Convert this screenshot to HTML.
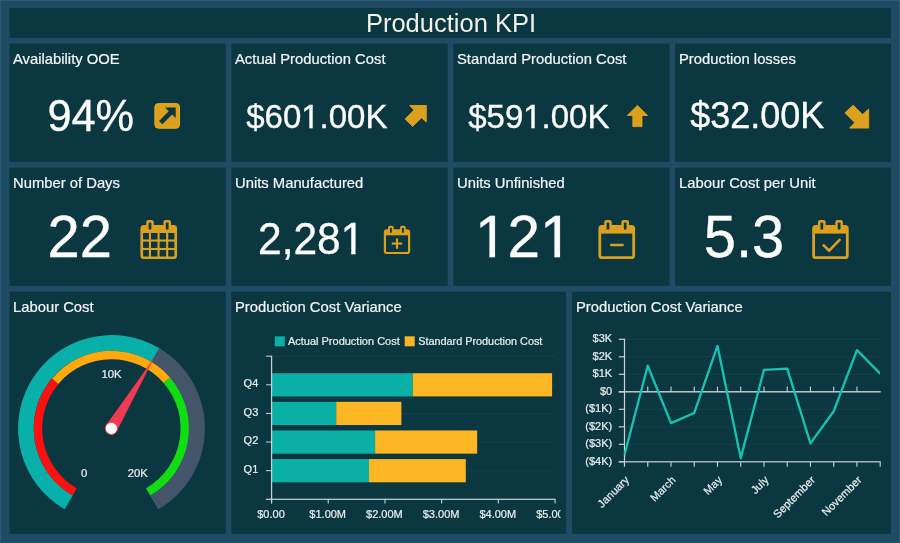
<!DOCTYPE html>
<html><head><meta charset="utf-8">
<style>
html,body{margin:0;padding:0;}
body{width:900px;height:543px;background:#204b64;font-family:"Liberation Sans",sans-serif;color:#f4f4f4;position:relative;overflow:hidden;}
.t{-webkit-text-stroke:0.2px #f6f6f6;will-change:transform;position:absolute;font-size:14.8px;line-height:18px;white-space:nowrap;color:#f6f6f6;}
.v{position:absolute;white-space:nowrap;color:#fcfcfc;line-height:1;}
svg text{stroke:#e9eded;stroke-width:0.22px;}
svg text.big{stroke:#fcfcfc;stroke-width:0.35px;}
svg{will-change:transform;position:absolute;left:0;top:0;width:900px;height:543px;overflow:hidden;font-family:"Liberation Sans",sans-serif;}
#hdr{will-change:transform;position:absolute;left:9.6px;top:8px;width:882px;height:30px;text-align:center;font-size:25.5px;line-height:30px;color:#f3efe9;}
</style></head><body>
<svg width="900" height="543" viewBox="0 0 900 543">
<rect x="0" y="0" width="900" height="1" fill="#2c5a72"/><rect x="0" y="0" width="1" height="543" fill="#2c5a72"/><rect x="899" y="0" width="1" height="543" fill="#2c5a72"/><rect x="0" y="542" width="900" height="1" fill="#275670"/>
<rect x="9.5" y="8.0" width="881.45" height="29.85" fill="#0b3741"/><rect x="9.5" y="43.6" width="216.20" height="118.20" fill="#0b3741"/><rect x="231.35" y="43.6" width="216.35" height="118.20" fill="#0b3741"/><rect x="453.25" y="43.6" width="216.30" height="118.20" fill="#0b3741"/><rect x="675.2" y="43.6" width="215.75" height="118.20" fill="#0b3741"/><rect x="9.5" y="167.65" width="216.20" height="118.15" fill="#0b3741"/><rect x="231.35" y="167.65" width="216.35" height="118.15" fill="#0b3741"/><rect x="453.25" y="167.65" width="216.30" height="118.15" fill="#0b3741"/><rect x="675.2" y="167.65" width="215.75" height="118.15" fill="#0b3741"/><rect x="9.5" y="291.7" width="216.20" height="242.10" fill="#0b3741"/><rect x="231.3" y="291.7" width="334.85" height="242.10" fill="#0b3741"/><rect x="571.95" y="291.7" width="319.00" height="242.10" fill="#0b3741"/></svg>
<div id="hdr">Production KPI</div>
<div class="t" style="left:13px;top:50px">Availability OOE</div>
<div class="t" style="left:235px;top:50px">Actual Production Cost</div>
<div class="t" style="left:457px;top:50px">Standard Production Cost</div>
<div class="t" style="left:679px;top:50px">Production losses</div>
<div class="t" style="left:13px;top:174px">Number of Days</div>
<div class="t" style="left:235px;top:174px">Units Manufactured</div>
<div class="t" style="left:457px;top:174px">Units Unfinished</div>
<div class="t" style="left:679px;top:174px">Labour Cost per Unit</div>
<div class="t" style="left:13px;top:298px">Labour Cost</div>
<div class="t" style="left:235px;top:298px">Production Cost Variance</div>
<div class="t" style="left:576px;top:298px">Production Cost Variance</div>
<svg width="900" height="543" viewBox="0 0 900 543">
<defs><clipPath id="cb"><rect x="231" y="500" width="329.6" height="34"/></clipPath>
<clipPath id="cl"><rect x="623.3" y="330" width="256.90000000000003" height="140"/></clipPath></defs>
<text transform="translate(47.4,130.6) scale(1,1.04)" class="big" font-size="43.3" fill="#fcfcfc">94%</text><text transform="translate(246.2,127.5) scale(1,1.03)" class="big" font-size="33" fill="#fcfcfc">$601.00K</text><text transform="translate(468.2,127.5) scale(1,1.03)" class="big" font-size="33" fill="#fcfcfc">$591.00K</text><text transform="translate(690.2,127.7) scale(1,1.04)" class="big" font-size="36" fill="#fcfcfc">$32.00K</text><text transform="translate(47.6,257.3) scale(1,1.017)" class="big" font-size="58" fill="#fcfcfc">22</text><text transform="translate(258.0,254.0) scale(1,1.03)" class="big" font-size="42.5" fill="#fcfcfc">2,281</text><text transform="translate(475.0,257.4) scale(1,1.028)" class="big" font-size="58.5" fill="#fcfcfc">121</text><text transform="translate(703.7,257.0) scale(1,1.01)" class="big" font-size="58" fill="#fcfcfc">5.3</text>
<rect x="477.5" y="251.95" width="11.88" height="6.55" fill="#0b3741"/><rect x="495.09" y="251.95" width="11.41" height="6.55" fill="#0b3741"/>
<rect x="542.5" y="251.95" width="11.88" height="6.55" fill="#0b3741"/><rect x="560.09" y="251.95" width="11.41" height="6.55" fill="#0b3741"/>
<rect x="342.5" y="249.95" width="8.72" height="5.55" fill="#0b3741"/><rect x="355.56" y="249.95" width="8.94" height="5.55" fill="#0b3741"/>
<rect x="301.5" y="124.95" width="7.79" height="4.55" fill="#0b3741"/><rect x="312.72" y="124.95" width="7.78" height="4.55" fill="#0b3741"/>
<rect x="523.5" y="124.95" width="7.79" height="4.55" fill="#0b3741"/><rect x="534.72" y="124.95" width="7.78" height="4.55" fill="#0b3741"/>
<rect x="154.9" y="103.6" width="24.6" height="24.6" rx="3.4" fill="#dca01f" stroke="#eeaa1c" stroke-width="1"/>
<path d="M164.9,107.5 L175.7,107.5 L175.7,118.1 L172.2,114.5 L162.3,124.2 L159.0,120.9 L168.8,111.2 Z" fill="#0b3741"/>
<path d="M409.6,105.5 L426.3,105.5 L426.3,122 L421.6,117.7 L412.6,126.4 L405.1,118.9 L414.1,110.1 Z" fill="#dca01f" stroke="#eeaa1c" stroke-width="0.8" stroke-linejoin="miter"/>
<path d="M637.4,105.4 L647.6,115.5 L642,115.5 L642,126.6 L632.8,126.6 L632.8,115.5 L627.2,115.5 Z" fill="#dca01f" stroke="#eeaa1c" stroke-width="0.8"/>
<path d="M853.2,105.2 L862.6,114.5 L868.7,109 L868.7,128.1 L849.6,128.1 L854.8,122.6 L844.9,112.8 Z" fill="#dca01f" stroke="#eeaa1c" stroke-width="0.8"/>
<rect x="141.75" y="226.35" width="34.00" height="31.40" rx="2.3" fill="none" stroke="#dca01f" stroke-width="2.7"/><rect x="141.75" y="226.35" width="34.00" height="6.65" fill="#dca01f"/><rect x="146.20" y="220.00" width="7.60" height="10.10" rx="2.24" fill="#dca01f"/><rect x="148.65" y="222.45" width="2.70" height="7.05" rx="0.84" fill="#0b3741"/><rect x="163.40" y="220.00" width="7.60" height="10.10" rx="2.24" fill="#dca01f"/><rect x="165.85" y="222.45" width="2.70" height="7.05" rx="0.84" fill="#0b3741"/>
<rect x="148.90" y="233" width="2.1" height="24" fill="#dca01f"/>
<rect x="157.50" y="233" width="2.1" height="24" fill="#dca01f"/>
<rect x="166.10" y="233" width="2.1" height="24" fill="#dca01f"/>
<rect x="142" y="239.50" width="34" height="2.1" fill="#dca01f"/>
<rect x="142" y="247.95" width="34" height="2.1" fill="#dca01f"/>
<rect x="384.90" y="230.30" width="24.20" height="22.70" rx="2" fill="none" stroke="#dca01f" stroke-width="2.2"/><rect x="384.90" y="230.30" width="24.20" height="5.00" fill="#dca01f"/><rect x="388.10" y="225.80" width="5.60" height="7.50" rx="1.65" fill="#dca01f"/><rect x="390.00" y="227.70" width="1.80" height="5.00" rx="0.56" fill="#0b3741"/><rect x="400.10" y="225.80" width="5.60" height="7.50" rx="1.65" fill="#dca01f"/><rect x="402.00" y="227.70" width="1.80" height="5.00" rx="0.56" fill="#0b3741"/>
<rect x="391.8" y="242.5" width="10.4" height="2.1" fill="#dca01f"/><rect x="395.95" y="238.4" width="2.1" height="10.4" fill="#dca01f"/>
<rect x="599.80" y="226.40" width="33.90" height="31.30" rx="2.3" fill="none" stroke="#dca01f" stroke-width="2.8"/><rect x="599.80" y="226.40" width="33.90" height="7.20" fill="#dca01f"/><rect x="604.20" y="220.00" width="7.60" height="10.10" rx="2.24" fill="#dca01f"/><rect x="606.65" y="222.45" width="2.70" height="7.05" rx="0.84" fill="#0b3741"/><rect x="621.40" y="220.00" width="7.60" height="10.10" rx="2.24" fill="#dca01f"/><rect x="623.85" y="222.45" width="2.70" height="7.05" rx="0.84" fill="#0b3741"/>
<rect x="610" y="243.7" width="13.8" height="2.5" rx="1" fill="#dca01f"/>
<rect x="813.60" y="226.40" width="33.70" height="31.30" rx="2.3" fill="none" stroke="#dca01f" stroke-width="2.8"/><rect x="813.60" y="226.40" width="33.70" height="7.20" fill="#dca01f"/><rect x="818.00" y="220.00" width="7.60" height="10.10" rx="2.24" fill="#dca01f"/><rect x="820.45" y="222.45" width="2.70" height="7.05" rx="0.84" fill="#0b3741"/><rect x="835.30" y="220.00" width="7.60" height="10.10" rx="2.24" fill="#dca01f"/><rect x="837.75" y="222.45" width="2.70" height="7.05" rx="0.84" fill="#0b3741"/>
<path d="M822.9,244.6 L829.1,250.6 L840.3,239.2" fill="none" stroke="#dca01f" stroke-width="2.6" stroke-linecap="butt" stroke-linejoin="miter"/>
<path d="M64.65,509.37 A93.5,93.5 0 1 1 159.56,348.25 L151.26,362.06 A77.4,77.4 0 1 0 72.70,495.43 Z" fill="#09b0a9"/>
<path d="M159.56,348.25 A93.5,93.5 0 0 1 158.15,509.37 L150.10,495.43 A77.4,77.4 0 0 0 151.26,362.06 Z" fill="#44546a"/>
<path d="M72.60,495.60 A77.6,77.6 0 0 1 51.95,378.52 L58.39,383.92 A69.2,69.2 0 0 0 76.80,488.33 Z" fill="#ff1010"/>
<path d="M51.95,378.52 A77.6,77.6 0 0 1 169.97,377.49 L163.63,383.00 A69.2,69.2 0 0 0 58.39,383.92 Z" fill="#ffa90c"/>
<path d="M169.97,377.49 A77.6,77.6 0 0 1 150.20,495.60 L146.00,488.33 A69.2,69.2 0 0 0 163.63,383.00 Z" fill="#12dc12"/>
<path d="M106.10,425.19 L154.14,357.83 L116.70,431.61 Z" fill="#ef3a52"/>
<circle cx="111.4" cy="428.4" r="6.1" fill="#ffffff" stroke="#ef3a52" stroke-width="1"/>
<g font-size="11.3" fill="#e9eded" text-anchor="middle"><text x="111.6" y="378">10K</text><text x="84.2" y="477">0</text><text x="137.8" y="477">20K</text></g>
<rect x="271.5" y="355.70" width="283.5" height="1" fill="#17414b"/>
<rect x="271.5" y="384.32" width="283.5" height="1" fill="#17414b"/>
<rect x="271.5" y="412.94" width="283.5" height="1" fill="#17414b"/>
<rect x="271.5" y="441.56" width="283.5" height="1" fill="#17414b"/>
<rect x="271.5" y="470.18" width="283.5" height="1" fill="#17414b"/>
<rect x="272.0" y="373.22" width="140.80" height="23.2" fill="#0aafa5"/>
<rect x="412.80" y="373.22" width="139.30" height="23.2" fill="#fdb623"/>
<rect x="266" y="384.32" width="5.5" height="1" fill="#c9d3d4"/>
<text x="243.6" y="386.92" font-size="11" fill="#e9eded">Q4</text>
<rect x="272.0" y="401.84" width="64.20" height="23.2" fill="#0aafa5"/>
<rect x="336.20" y="401.84" width="65.20" height="23.2" fill="#fdb623"/>
<rect x="266" y="412.94" width="5.5" height="1" fill="#c9d3d4"/>
<text x="243.6" y="415.54" font-size="11" fill="#e9eded">Q3</text>
<rect x="272.0" y="430.46" width="103.10" height="23.2" fill="#0aafa5"/>
<rect x="375.10" y="430.46" width="102.10" height="23.2" fill="#fdb623"/>
<rect x="266" y="441.56" width="5.5" height="1" fill="#c9d3d4"/>
<text x="243.6" y="444.16" font-size="11" fill="#e9eded">Q2</text>
<rect x="272.0" y="459.08" width="97.00" height="23.2" fill="#0aafa5"/>
<rect x="369.00" y="459.08" width="96.80" height="23.2" fill="#fdb623"/>
<rect x="266" y="470.18" width="5.5" height="1" fill="#c9d3d4"/>
<text x="243.6" y="472.78" font-size="11" fill="#e9eded">Q1</text>
<rect x="266" y="355.7" width="5.5" height="1" fill="#c9d3d4"/>
<rect x="271.0" y="355.7" width="1.2" height="147.60000000000002" fill="#c9d3d4"/>
<rect x="266" y="498.7" width="289.5" height="1.2" fill="#c9d3d4"/>
<rect x="271.00" y="499.3" width="1.1" height="4.2" fill="#c9d3d4"/>
<rect x="327.70" y="499.3" width="1.1" height="4.2" fill="#c9d3d4"/>
<rect x="384.40" y="499.3" width="1.1" height="4.2" fill="#c9d3d4"/>
<rect x="441.10" y="499.3" width="1.1" height="4.2" fill="#c9d3d4"/>
<rect x="497.80" y="499.3" width="1.1" height="4.2" fill="#c9d3d4"/>
<rect x="554.50" y="499.3" width="1.1" height="4.2" fill="#c9d3d4"/>
<g clip-path="url(#cb)">
<text x="271.00" y="518.4" font-size="11" fill="#e9eded" text-anchor="middle">$0.00</text>
<text x="327.70" y="518.4" font-size="11" fill="#e9eded" text-anchor="middle">$1.00M</text>
<text x="384.40" y="518.4" font-size="11" fill="#e9eded" text-anchor="middle">$2.00M</text>
<text x="441.10" y="518.4" font-size="11" fill="#e9eded" text-anchor="middle">$3.00M</text>
<text x="497.80" y="518.4" font-size="11" fill="#e9eded" text-anchor="middle">$4.00M</text>
<text x="554.50" y="518.4" font-size="11" fill="#e9eded" text-anchor="middle">$5.00M</text>
</g>
<rect x="274.8" y="336.3" width="10" height="10" fill="#0aafa5"/>
<text x="287.9" y="344.8" font-size="11" fill="#e9eded">Actual Production Cost</text>
<rect x="404.7" y="336.3" width="10" height="10" fill="#fdb623"/>
<text x="418.2" y="344.8" font-size="10.85" fill="#e9eded">Standard Production Cost</text>
<rect x="624.5" y="338.80" width="255.70000000000005" height="1" fill="#17414b"/>
<rect x="624.5" y="356.30" width="255.70000000000005" height="1" fill="#17414b"/>
<rect x="624.5" y="373.80" width="255.70000000000005" height="1" fill="#17414b"/>
<rect x="624.5" y="408.80" width="255.70000000000005" height="1" fill="#17414b"/>
<rect x="624.5" y="426.30" width="255.70000000000005" height="1" fill="#17414b"/>
<rect x="624.5" y="443.80" width="255.70000000000005" height="1" fill="#17414b"/>
<rect x="618.8" y="338.70" width="6" height="1.2" fill="#c9d3d4"/>
<text x="612.2" y="342.40" font-size="11" fill="#e9eded" text-anchor="end">$3K</text>
<rect x="618.8" y="356.20" width="6" height="1.2" fill="#c9d3d4"/>
<text x="612.2" y="359.90" font-size="11" fill="#e9eded" text-anchor="end">$2K</text>
<rect x="618.8" y="373.70" width="6" height="1.2" fill="#c9d3d4"/>
<text x="612.2" y="377.40" font-size="11" fill="#e9eded" text-anchor="end">$1K</text>
<rect x="618.8" y="391.20" width="6" height="1.2" fill="#c9d3d4"/>
<text x="612.2" y="394.90" font-size="11" fill="#e9eded" text-anchor="end">$0</text>
<rect x="618.8" y="408.70" width="6" height="1.2" fill="#c9d3d4"/>
<text x="612.2" y="412.40" font-size="11" fill="#e9eded" text-anchor="end">($1K)</text>
<rect x="618.8" y="426.20" width="6" height="1.2" fill="#c9d3d4"/>
<text x="612.2" y="429.90" font-size="11" fill="#e9eded" text-anchor="end">($2K)</text>
<rect x="618.8" y="443.70" width="6" height="1.2" fill="#c9d3d4"/>
<text x="612.2" y="447.40" font-size="11" fill="#e9eded" text-anchor="end">($3K)</text>
<rect x="618.8" y="461.20" width="6" height="1.2" fill="#c9d3d4"/>
<text x="612.2" y="464.90" font-size="11" fill="#e9eded" text-anchor="end">($4K)</text>
<rect x="623.9" y="338.80" width="1.2" height="127.90" fill="#c9d3d4"/>
<rect x="618.8" y="391.10" width="261.90" height="1.4" fill="#c9d3d4"/>
<rect x="618.8" y="461.20" width="261.90" height="1.2" fill="#c9d3d4"/>
<rect x="647.20" y="461.80" width="1.1" height="5" fill="#c9d3d4"/>
<rect x="647.20" y="386.60" width="1.1" height="5" fill="#c9d3d4"/>
<rect x="670.44" y="461.80" width="1.1" height="5" fill="#c9d3d4"/>
<rect x="670.44" y="386.60" width="1.1" height="5" fill="#c9d3d4"/>
<rect x="693.69" y="461.80" width="1.1" height="5" fill="#c9d3d4"/>
<rect x="693.69" y="386.60" width="1.1" height="5" fill="#c9d3d4"/>
<rect x="716.93" y="461.80" width="1.1" height="5" fill="#c9d3d4"/>
<rect x="716.93" y="386.60" width="1.1" height="5" fill="#c9d3d4"/>
<rect x="740.18" y="461.80" width="1.1" height="5" fill="#c9d3d4"/>
<rect x="740.18" y="386.60" width="1.1" height="5" fill="#c9d3d4"/>
<rect x="763.42" y="461.80" width="1.1" height="5" fill="#c9d3d4"/>
<rect x="763.42" y="386.60" width="1.1" height="5" fill="#c9d3d4"/>
<rect x="786.67" y="461.80" width="1.1" height="5" fill="#c9d3d4"/>
<rect x="786.67" y="386.60" width="1.1" height="5" fill="#c9d3d4"/>
<rect x="809.91" y="461.80" width="1.1" height="5" fill="#c9d3d4"/>
<rect x="809.91" y="386.60" width="1.1" height="5" fill="#c9d3d4"/>
<rect x="833.16" y="461.80" width="1.1" height="5" fill="#c9d3d4"/>
<rect x="833.16" y="386.60" width="1.1" height="5" fill="#c9d3d4"/>
<rect x="856.40" y="461.80" width="1.1" height="5" fill="#c9d3d4"/>
<rect x="856.40" y="386.60" width="1.1" height="5" fill="#c9d3d4"/>
<rect x="879.65" y="461.80" width="1.1" height="5" fill="#c9d3d4"/>
<polyline points="624.50,454.80 647.75,365.73 670.99,423.12 694.24,412.98 717.48,345.95 740.73,458.12 763.97,369.93 787.22,368.70 810.46,443.43 833.71,411.23 856.95,350.15 880.20,373.60" fill="none" stroke="#17c4b3" stroke-width="2.3" stroke-linejoin="round" clip-path="url(#cl)"/>
<text transform="translate(629.80,480.7) rotate(-45)" font-size="11" fill="#e9eded" text-anchor="end">January</text>
<text transform="translate(676.29,480.7) rotate(-45)" font-size="11" fill="#e9eded" text-anchor="end">March</text>
<text transform="translate(722.78,480.7) rotate(-45)" font-size="11" fill="#e9eded" text-anchor="end">May</text>
<text transform="translate(769.27,480.7) rotate(-45)" font-size="11" fill="#e9eded" text-anchor="end">July</text>
<text transform="translate(815.76,480.7) rotate(-45)" font-size="11" fill="#e9eded" text-anchor="end">September</text>
<text transform="translate(862.25,480.7) rotate(-45)" font-size="11" fill="#e9eded" text-anchor="end">November</text>
</svg>
</body></html>
